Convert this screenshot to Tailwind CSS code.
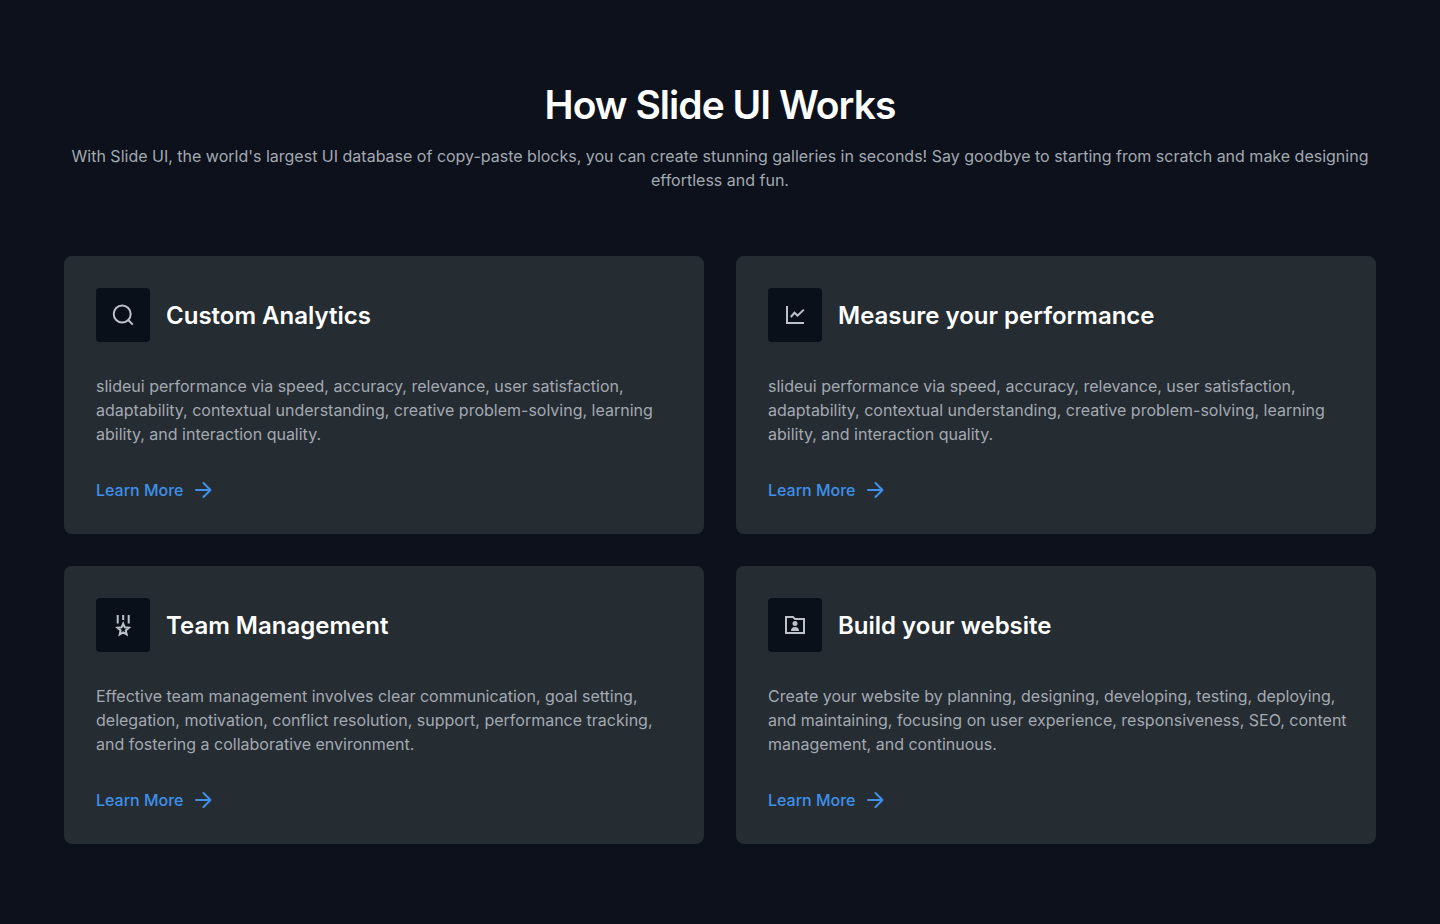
<!DOCTYPE html>
<html lang="en">
<head>
<meta charset="utf-8">
<meta name="viewport" content="width=device-width, initial-scale=1">
<title>How Slide UI Works</title>
<script src="https://cdn.jsdelivr.net/npm/@tailwindcss/browser@4"></script>
</head>
<body class="min-h-screen bg-[#0c111b] font-['Inter',sans-serif] text-[#a3a9b1]">
<main class="px-4 py-20 md:px-16">
  <header class="text-center">
    <h1 class="text-[39px] leading-[50px] font-semibold tracking-tight text-white">How Slide UI Works</h1>
    <p class="mt-[14px] text-base">With Slide UI, the world's largest UI database of copy-paste blocks, you can create stunning galleries in seconds! Say goodbye to starting from scratch and make designing effortless and fun.</p>
  </header>
  <section class="mt-16 grid gap-8 md:grid-cols-2">
    <article class="rounded-lg bg-[#252c32] py-8 pr-6 pl-8">
      <div class="flex items-center gap-4">
        <span class="flex size-[54px] shrink-0 items-center justify-center rounded bg-[#0a1019] text-[#bcc1ca]">
          <svg class="size-6" viewBox="0 0 24 24" fill="none" stroke="currentColor" stroke-width="2" aria-hidden="true"><circle cx="11.2" cy="11" r="8.5"/><path d="m17.2 17 4.6 4.6"/></svg>
        </span>
        <h2 class="text-2xl leading-[35px] font-semibold text-white">Custom Analytics</h2>
      </div>
      <p class="mt-8 text-base">slideui performance via speed, accuracy, relevance, user satisfaction, adaptability, contextual understanding, creative problem-solving, learning ability, and interaction quality.</p>
      <a href="#" class="mt-8 flex w-fit items-center gap-2 font-medium text-[#3f91ea]">Learn More
        <svg class="size-6" viewBox="0 0 24 24" fill="none" stroke="currentColor" stroke-width="2" stroke-linecap="round" stroke-linejoin="round" aria-hidden="true"><path d="M4 12h14.5M11.5 5l7 7-7 7"/></svg></a>
    </article>
    <article class="rounded-lg bg-[#252c32] py-8 pr-6 pl-8">
      <div class="flex items-center gap-4">
        <span class="flex size-[54px] shrink-0 items-center justify-center rounded bg-[#0a1019] text-[#bcc1ca]">
          <svg class="size-6" viewBox="0 0 24 24" fill="none" stroke="currentColor" stroke-width="2" aria-hidden="true"><path d="M4 3v17h17"/><path d="m7.8 14 3.7-4.2 3 2.8L20.8 6.6"/></svg>
        </span>
        <h2 class="text-2xl leading-[35px] font-semibold text-white">Measure your performance</h2>
      </div>
      <p class="mt-8 text-base">slideui performance via speed, accuracy, relevance, user satisfaction, adaptability, contextual understanding, creative problem-solving, learning ability, and interaction quality.</p>
      <a href="#" class="mt-8 flex w-fit items-center gap-2 font-medium text-[#3f91ea]">Learn More
        <svg class="size-6" viewBox="0 0 24 24" fill="none" stroke="currentColor" stroke-width="2" stroke-linecap="round" stroke-linejoin="round" aria-hidden="true"><path d="M4 12h14.5M11.5 5l7 7-7 7"/></svg></a>
    </article>
    <article class="rounded-lg bg-[#252c32] py-8 pr-6 pl-8">
      <div class="flex items-center gap-4">
        <span class="flex size-[54px] shrink-0 items-center justify-center rounded bg-[#0a1019] text-[#bcc1ca]">
          <svg class="size-6" viewBox="0 0 24 24" fill="none" stroke="currentColor" stroke-width="2" aria-hidden="true"><path d="M6.7 2v8.5M12.2 2v5M17.7 2v8.5"/><path d="m12.2 10.6 1.6 3.7 4.1.4-3.1 2.7.9 4-3.5-2.1-3.5 2.1.9-4-3.1-2.7 4.1-.4z"/></svg>
        </span>
        <h2 class="text-2xl leading-[35px] font-semibold text-white">Team Management</h2>
      </div>
      <p class="mt-8 text-base">Effective team management involves clear communication, goal setting, delegation, motivation, conflict resolution, support, performance tracking, and fostering a collaborative environment.</p>
      <a href="#" class="mt-8 flex w-fit items-center gap-2 font-medium text-[#3f91ea]">Learn More
        <svg class="size-6" viewBox="0 0 24 24" fill="none" stroke="currentColor" stroke-width="2" stroke-linecap="round" stroke-linejoin="round" aria-hidden="true"><path d="M4 12h14.5M11.5 5l7 7-7 7"/></svg></a>
    </article>
    <article class="rounded-lg bg-[#252c32] py-8 pr-6 pl-8">
      <div class="flex items-center gap-4">
        <span class="flex size-[54px] shrink-0 items-center justify-center rounded bg-[#0a1019] text-[#bcc1ca]">
          <svg class="size-6" viewBox="0 0 24 24" fill="currentColor" aria-hidden="true"><path fill-rule="evenodd" d="M2 3h8.4l2 2H22v16H2zM4 5v14h16V7h-8.4l-2-2z"/><circle cx="12" cy="10.5" r="2.5"/><path d="M8 18a4 4 0 0 1 8 0z"/></svg>
        </span>
        <h2 class="text-2xl leading-[35px] font-semibold text-white">Build your website</h2>
      </div>
      <p class="mt-8 text-base">Create your website by planning, designing, developing, testing, deploying, and maintaining, focusing on user experience, responsiveness, SEO, content management, and continuous.</p>
      <a href="#" class="mt-8 flex w-fit items-center gap-2 font-medium text-[#3f91ea]">Learn More
        <svg class="size-6" viewBox="0 0 24 24" fill="none" stroke="currentColor" stroke-width="2" stroke-linecap="round" stroke-linejoin="round" aria-hidden="true"><path d="M4 12h14.5M11.5 5l7 7-7 7"/></svg></a>
    </article>
  </section>
</main>
</body>
</html>
